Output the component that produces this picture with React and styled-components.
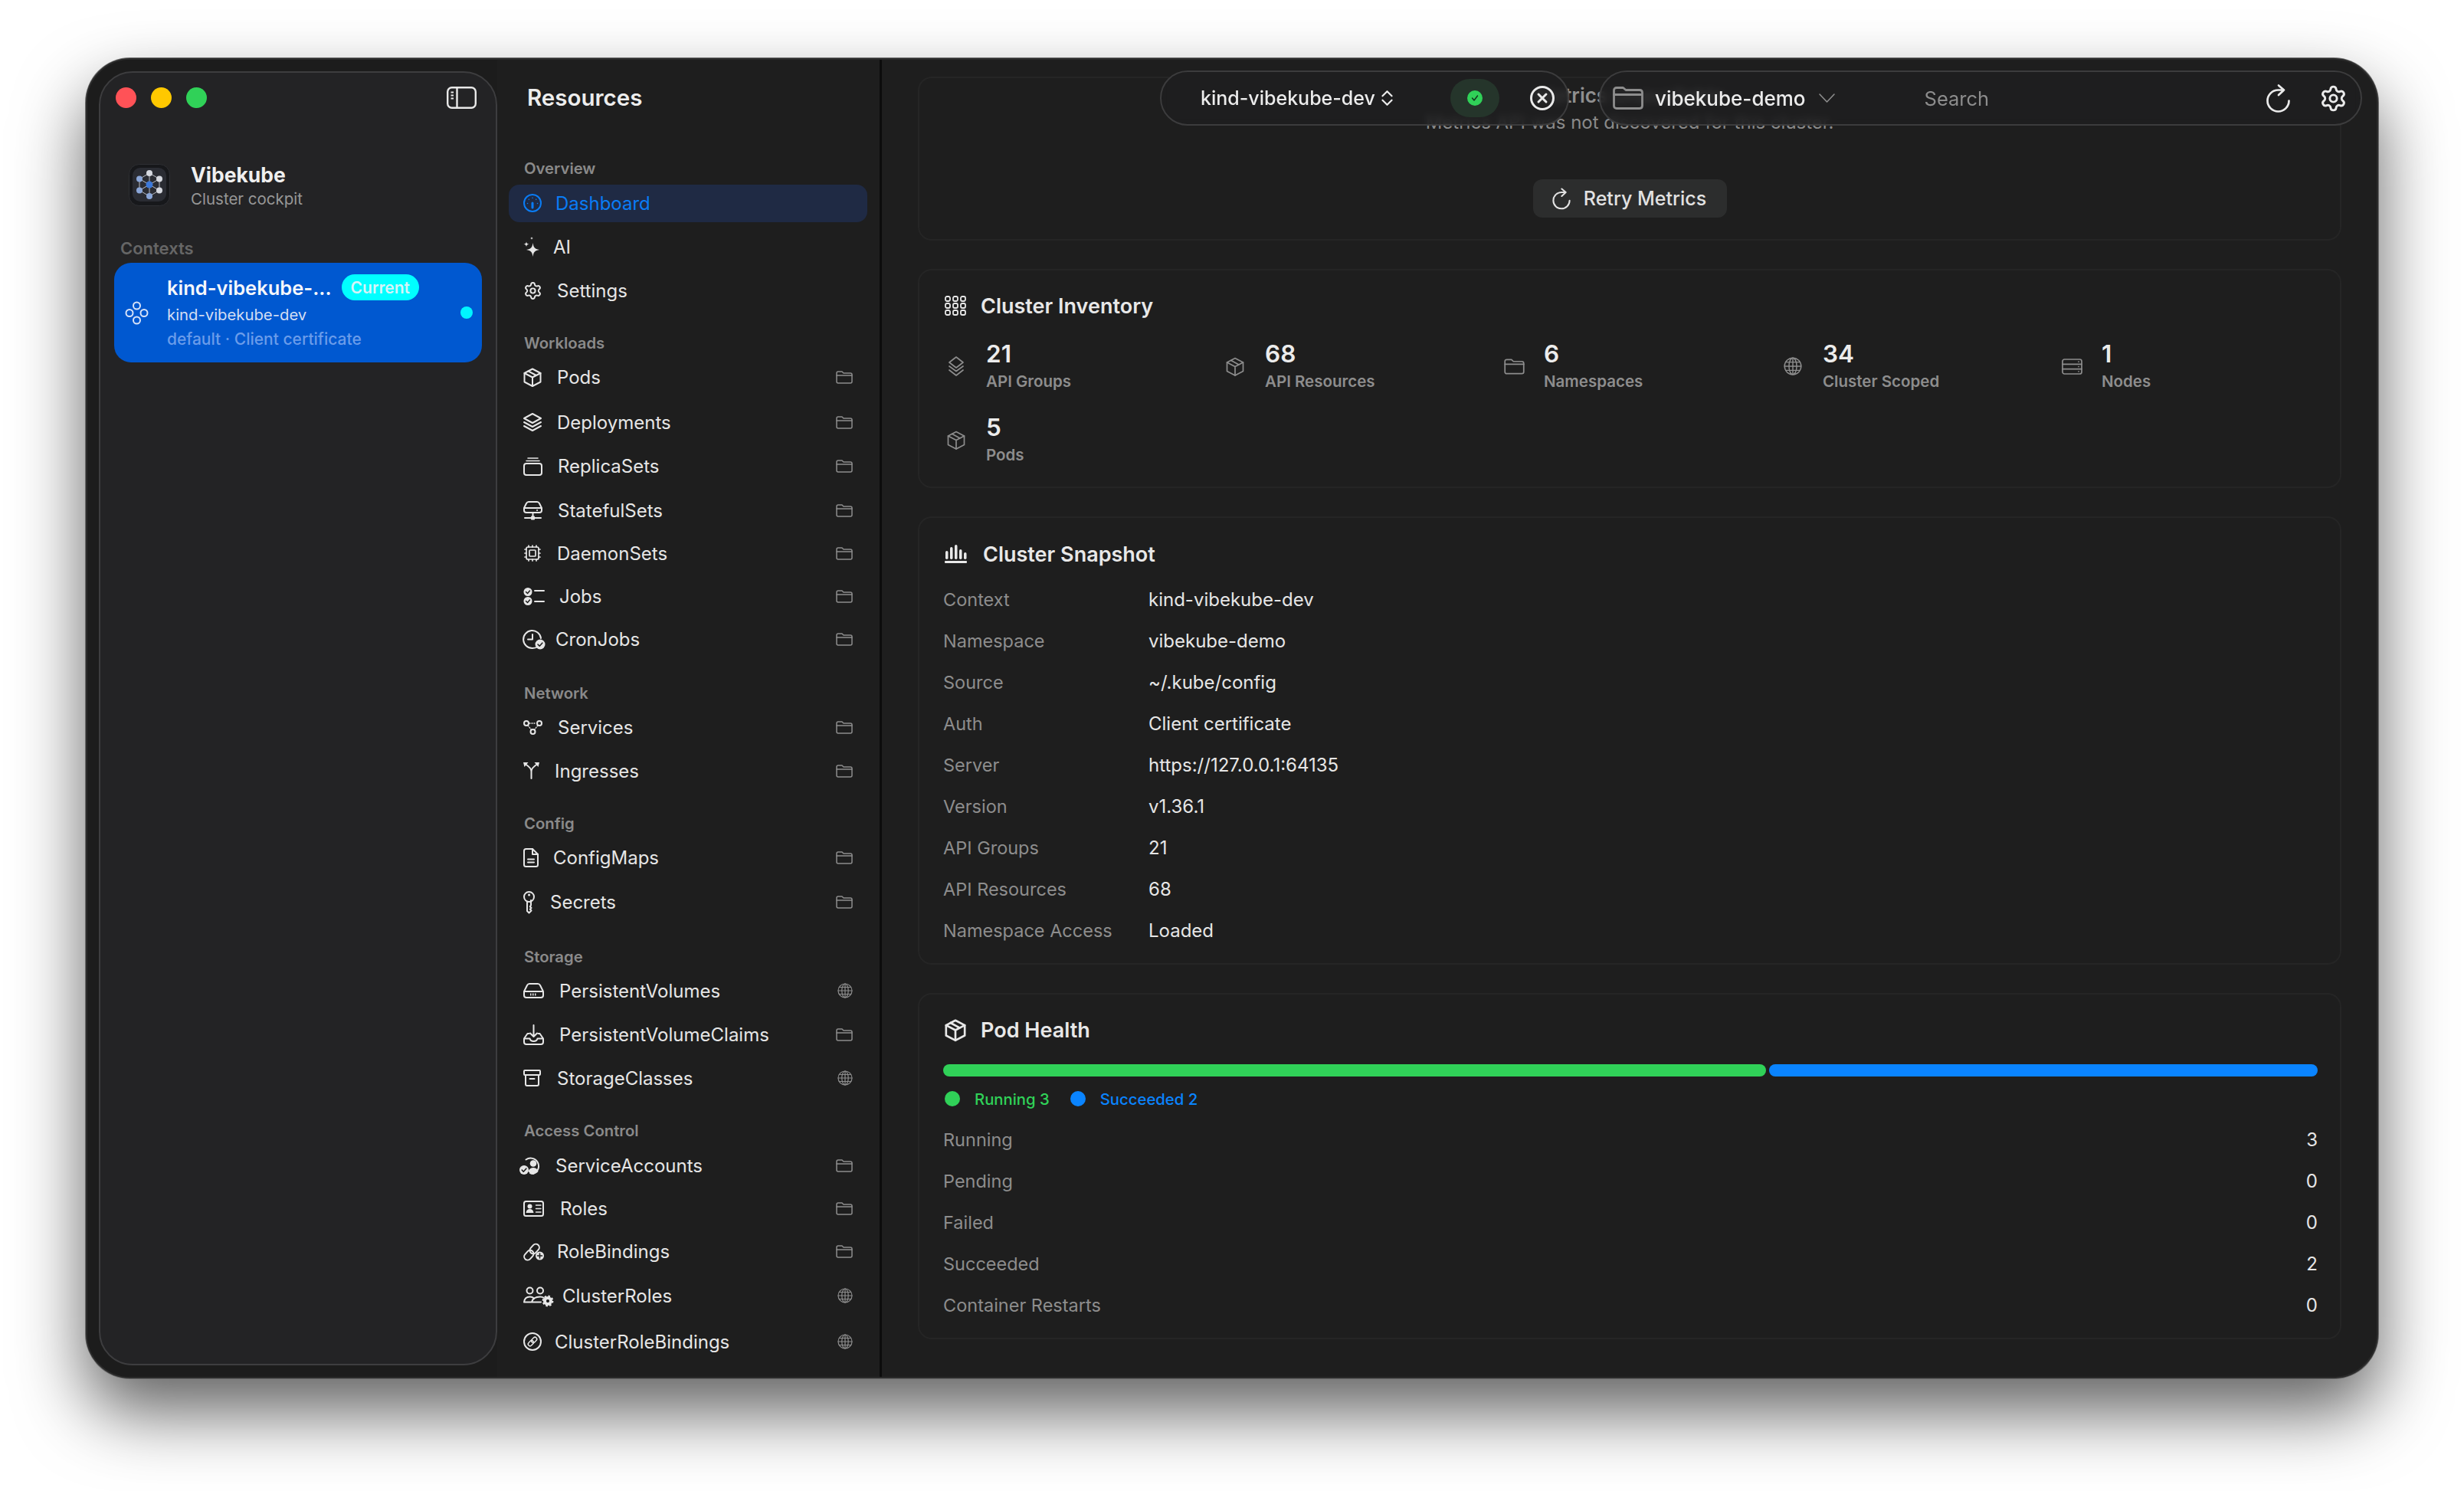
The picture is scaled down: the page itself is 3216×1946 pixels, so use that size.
import styled, { createGlobalStyle } from 'styled-components';
import { Cpu, Settings } from 'lucide-react';

const GlobalStyle = createGlobalStyle`
  html, body {
    margin: 0;
    background: #fff;
    font-family: Inter, "Noto Sans", sans-serif;
    overflow: hidden;
  }
  * { box-sizing: border-box; }
`;

const Page = styled.div`
  width: 3216px;
  height: 1946px;
  padding: 76px 0 0 112px;
`;

const Window = styled.div`
  width: 2992px;
  height: 1723px;
  display: flex;
  background: #1e1e1e;
  border: 2px solid #2a2a2a;
  border-radius: 58px;
  overflow: hidden;
  box-shadow: 0 0 0 1px #6a6a6a, 0 44px 90px rgba(0, 0, 0, 0.62);
`;

/* ---------- left sidebar ---------- */

const SidebarColumn = styled.aside`
  width: 535px;
  flex-shrink: 0;
  padding: 15px 0 15px 15px;
  background: #1c1c1c;
`;

const SidebarPanel = styled.div`
  height: 100%;
  background: #232325;
  border: 2px solid #3d3d3f;
  border-radius: 44px;
  padding-top: 18px;
`;

const TitleBar = styled.div`
  display: flex;
  align-items: center;
  padding: 0 25px 0 20px;
  color: #e8e8e8;
`;

const Light = styled.span`
  width: 27px;
  height: 27px;
  border-radius: 50%;
  margin-right: 19px;
  background: ${(p) => p.$color};
`;

const Spacer = styled.div`
  flex: 1;
`;

const Brand = styled.div`
  display: flex;
  gap: 27px;
  margin-top: 72px;
  padding-left: 37px;
`;

const BrandText = styled.div`
  margin-top: -2px;
`;

const BrandName = styled.div`
  font-size: 26.5px;
  font-weight: 700;
  line-height: 32px;
  color: #efefef;
`;

const BrandSub = styled.div`
  font-size: 20.5px;
  line-height: 32px;
  color: #979797;
`;

const ContextsLabel = styled.div`
  margin-top: 35px;
  padding-left: 26px;
  font-size: 22px;
  font-weight: 600;
  line-height: 26px;
  color: #666;
`;

const ContextCard = styled.div`
  height: 130px;
  margin: 6px 18px 0;
  padding: 0 12px 0 15px;
  display: flex;
  align-items: center;
  gap: 25px;
  background: #0058d0;
  border-radius: 22px;
  color: #d8e3f8;
`;

const ContextText = styled.div`
  flex: 1;
  min-width: 0;
`;

const ContextTitleRow = styled.div`
  display: flex;
  align-items: center;
  height: 36px;
  gap: 13px;
  margin-bottom: 2px;
`;

const ContextTitle = styled.span`
  font-size: 25.5px;
  font-weight: 600;
  color: #f5f7fb;
  white-space: nowrap;
`;

const CurrentBadge = styled.span`
  height: 34px;
  padding: 0 12px;
  display: flex;
  align-items: center;
  border-radius: 17px;
  background: #00ffff;
  font-size: 21px;
  font-weight: 600;
  color: #d6f4f8;
`;

const ContextLine = styled.div`
  font-size: ${(p) => (p.$faded ? 21 : 20.3)}px;
  line-height: 32px;
  font-weight: ${(p) => (p.$faded ? 500 : 400)};
  color: ${(p) => (p.$faded ? '#6a9cea' : '#d4def3')};
  white-space: nowrap;
`;

const ContextDot = styled.span`
  width: 16px;
  height: 16px;
  border-radius: 50%;
  background: #00f5ff;
  flex-shrink: 0;
`;

/* ---------- resources nav ---------- */

const NavColumn = styled.nav`
  width: 502px;
  flex-shrink: 0;
  padding: 31px 16px 0 15px;
  border-right: 3px solid #0c0c0c;
  overflow: hidden;
`;

const NavTitle = styled.h1`
  margin: 0 0 0 24px;
  font-size: 29.5px;
  font-weight: 600;
  line-height: 36px;
  color: #ededed;
`;

const NavSection = styled.div`
  margin-top: ${(p) => p.$top}px;
`;

const NavHeading = styled.div`
  padding-left: 20px;
  font-size: 20.3px;
  font-weight: 600;
  line-height: 26px;
  color: #8a8a8a;
`;

const NavRow = styled.div`
  display: flex;
  align-items: center;
  height: 40px;
  margin-top: ${(p) => p.$gap}px;
  padding: 0 19px;
  font-size: 24px;
  font-weight: 400;
  color: ${(p) => (p.$active ? '#0a7cf5' : '#e6e6e6')};
  ${(p) =>
    p.$active &&
    `
    height: 49px;
    margin-top: ${p.$gap - 4.5}px;
    margin-bottom: -4.5px;
    background: #1f2a44;
    border-radius: 14px;
  `}
`;

const NavIcon = styled.span`
  display: flex;
  margin-left: ${(p) => p.$shift ?? 0}px;
`;

const NavLabel = styled.span`
  margin-left: ${(p) => p.$gap ?? 20}px;
  flex: 1;
`;

const ScopeIcon = styled.span`
  display: flex;
  color: #8d8d8d;
`;

/* ---------- main ---------- */

const Main = styled.main`
  flex: 1;
  min-width: 0;
  position: relative;
  padding: 22px 46px 0 47px;
  display: flex;
  flex-direction: column;
  gap: 37px;
  overflow: hidden;
`;

const Toolbar = styled.div`
  position: absolute;
  top: 14px;
  right: 19px;
  display: flex;
  gap: 39px;
`;

const Pill = styled.div`
  width: ${(p) => p.$width}px;
  height: 72px;
  display: flex;
  align-items: center;
  background: rgba(30, 30, 31, 0.8);
  backdrop-filter: blur(5px);
  border: 2px solid #3c3c3d;
  border-radius: 36px;
  font-size: 25px;
  font-weight: 500;
  color: #ececec;
`;

const PillContext = styled.span`
  margin: 0 7px 0 51px;
`;

const StatusChip = styled.span`
  width: 64px;
  height: 50px;
  margin: 0 40px 0 auto;
  display: flex;
  align-items: center;
  justify-content: center;
  border-radius: 25px;
  background: #25352b;
`;

const PillButton = styled.span`
  display: flex;
  margin-left: ${(p) => p.$left ?? 0}px;
  margin-right: ${(p) => p.$right ?? 0}px;
  color: ${(p) => (p.$muted ? '#8d8d8d' : '#eaeaea')};
`;

const NamespaceName = styled.span`
  margin: 0 17px 0 16px;
  font-size: 26px;
`;

const SearchLabel = styled.span`
  margin: 0 auto 0 117px;
  font-size: 25.5px;
  font-weight: 400;
  color: #8c8c8c;
`;

const Card = styled.section`
  flex-shrink: 0;
  border: 2px solid #252525;
  border-radius: 18px;
  padding: ${(p) => p.$pad};
`;

const MetricsCard = styled(Card)`
  height: 214px;
  display: flex;
  flex-direction: column;
  align-items: center;
`;

const MetricsTitle = styled.div`
  font-size: 26px;
  font-weight: 600;
  line-height: 36px;
  color: #8f8f8f;
`;

const MetricsText = styled.div`
  font-size: 24px;
  line-height: 34px;
  color: #8a8a8a;
`;

const RetryButton = styled.button`
  margin-top: 57px;
  height: 50px;
  width: 253px;
  display: flex;
  align-items: center;
  justify-content: center;
  gap: 18px;
  border: 0;
  border-radius: 12px;
  background: #2c2d2d;
  font-family: inherit;
  font-size: 25px;
  font-weight: 500;
  color: #e2e2e2;
`;

const CardHeader = styled.div`
  display: flex;
  align-items: center;
  gap: ${(p) => p.$gap}px;
  height: 32px;
  padding-left: 2px;
  font-size: 27px;
  font-weight: 600;
  color: #e8e8e8;
`;

const StatGrid = styled.div`
  margin-top: 28px;
  display: grid;
  grid-template-columns: repeat(5, 1fr);
  gap: 26px 28px;
`;

const Stat = styled.div`
  display: flex;
  align-items: center;
  gap: 22px;
`;

const StatIcon = styled.span`
  width: 34px;
  display: flex;
  justify-content: center;
  color: #8d8d8d;
`;

const StatValue = styled.div`
  font-size: 31.5px;
  font-weight: 600;
  line-height: 38px;
  margin-bottom: 2px;
  color: #ececec;
`;

const StatLabel = styled.div`
  font-size: 20.5px;
  font-weight: 600;
  line-height: 30px;
  color: #8d8d8d;
`;

const InfoRows = styled.div`
  margin-top: ${(p) => p.$top}px;
`;

const InfoRow = styled.div`
  height: 54px;
  display: flex;
  align-items: center;
  font-size: 23.5px;
  color: #8d8d8d;
  ${(p) => p.$spread && 'justify-content: space-between;'}
`;

const InfoLabel = styled.span`
  width: ${(p) => (p.$fixed ? '268px' : 'auto')};
`;

const InfoValue = styled.span`
  font-size: 24px;
  color: #e6e6e6;
`;

const HealthBar = styled.div`
  margin-top: 29px;
  display: flex;
  gap: 4px;
`;

const HealthSegment = styled.div`
  flex: ${(p) => p.$grow};
  height: 16px;
  border-radius: 8px;
  background: ${(p) => p.$color};
`;

const Legend = styled.div`
  margin-top: 15px;
  height: 28px;
  display: flex;
  align-items: center;
  font-size: 20.3px;
  font-weight: 500;
`;

const LegendDot = styled.span`
  width: 20px;
  height: 20px;
  margin-left: 2px;
  margin-right: 19px;
  border-radius: 50%;
  background: ${(p) => p.$color};
`;

const LegendText = styled.span`
  margin-right: 25px;
  color: ${(p) => p.$color};
`;

/* ---------- drawings ---------- */

const Svg = styled.svg`
  display: block;
  flex-shrink: 0;
  overflow: visible;
  fill: none;
  stroke: currentColor;
  stroke-width: ${(p) => p.$sw ?? 2};
  stroke-linecap: round;
  stroke-linejoin: round;
`;

const draw = (w, h, body, sw) => {
  const Drawn = ({ width = w, height = h, stroke }) => (
    <Svg width={width} height={height} viewBox={`0 0 ${w} ${h}`} $sw={stroke ?? sw}>
      {body}
    </Svg>
  );
  return Drawn;
};

const fillCur = { fill: 'currentColor', stroke: 'none' };
const BG = '#1e1e1e';

const GaugeIcon = draw(24, 24, (
  <>
    <circle cx="12" cy="12" r="11" />
    <path d="M12 12v6" strokeWidth="3" />
    <path d="M5.500 12.500h.1M7.300 7.300h.1M12 5.200h.1M16.700 7.300h.1M18.500 12.500h.1" strokeWidth="1.500" />
  </>
));

const SparkleIcon = draw(21, 27, (
  <>
    <path {...fillCur} d="M12.500 8c.9 6 2.300 7.900 8.500 9-6.200 1.100-7.600 3-8.500 9-.9-6-2.300-7.900-8.500-9 6.200-1.100 7.600-3 8.500-9z" />
    <path {...fillCur} d="M4 6.500c.4 2.100 1 2.800 3.500 3.200C5 10.100 4.400 10.800 4 13c-.4-2.200-1-2.900-3.500-3.300C3 9.300 3.600 8.600 4 6.500z" />
    <path {...fillCur} d="M11 0c.2 1.200.6 1.600 2 1.900-1.400.3-1.800.7-2 1.900-.2-1.200-.6-1.600-2-1.900 1.400-.3 1.800-.7 2-1.900z" />
  </>
));

const BoxIcon = draw(24, 25, (
  <>
    <path d="M12 1.500 22.500 7v11.500L12 24 1.500 18.500V7z" />
    <path d="M1.500 7 12 12.500 22.500 7M12 12.500V24M6.500 4.300 17 10" />
  </>
));

const LayersIcon = draw(24, 26, (
  <>
    <path d="M12 2 23 8l-11 6L1 8z" />
    <path d="m1 13 11 6 11-6M1 18l11 6 11-6" />
  </>
));

const ReplicaIcon = draw(25, 25, (
  <>
    <rect x="1" y="9" width="23" height="15" rx="3" />
    <path d="M4 5.500h17M6 2h13" strokeWidth="1.600" />
  </>
));

const StatefulIcon = draw(25, 26, (
  <>
    <path d="M4 4c.7-1.400 1.600-2 3-2h11c1.400 0 2.300.6 3 2l3 6v3c0 2-1 3-3 3H4c-2 0-3-1-3-3v-3zM1 10h23" />
    <path d="M18 13h.1M12.500 16v5M2 23h21" />
    <rect {...fillCur} x="10" y="20.500" width="5" height="5" rx="1" />
  </>
));

const ChecklistIcon = draw(27, 23, (
  <>
    <circle {...fillCur} cx="6" cy="5.500" r="5.500" />
    <circle {...fillCur} cx="6" cy="17.500" r="5.500" />
    <path d="m3.500 5.500 2 2 3-3.500M3.500 17.500l2 2 3-3.500" stroke={BG} strokeWidth="1.500" />
    <path d="M15 4h12M15 18h12" />
  </>
));

const CronIcon = draw(28, 25, (
  <>
    <path d="M19 22c-2 1.300-4.400 2-7 2A11.500 11.500 0 1 1 23 11" />
    <path d="M12 6v6.500H6" />
    <circle {...fillCur} cx="22" cy="19" r="6.500" />
    <path d="m19 19 2.200 2.200 3.600-4" stroke={BG} strokeWidth="1.600" />
  </>
));

const ServicesIcon = draw(25, 19, (
  <>
    <circle cx="4" cy="4" r="3" />
    <circle cx="21" cy="4" r="3" />
    <circle cx="12.500" cy="15" r="3" />
    <path d="M8 4h9M6.200 7l4.300 5.500M18.800 7l-4.300 5.500" strokeWidth="1.400" strokeDasharray="1 2" />
  </>
));

const IngressIcon = draw(21, 22, (
  <>
    <path d="M10.500 21V12C10.500 8 7 5 3 2.500M10.500 12c0-4 3.500-7 7.500-9.500" />
    <path {...fillCur} d="M0 0h6.500L1.500 6zM21 0h-6.500l5 6z" />
  </>
));

const DocIcon = draw(20, 25, (
  <>
    <path d="M3.500 1H12l7 7v13.500c0 1.700-1 2.500-2.500 2.500h-13C2 24 1 23.200 1 21.500v-18C1 1.800 2 1 3.500 1z" />
    <path d="M12 1v7h7M6 14.500h8M6 18.500h8" />
  </>
));

const KeyIcon = draw(15, 29, (
  <>
    <circle cx="7.500" cy="7.500" r="6.500" />
    <path d="M5 13.500V26l2.500 2.500 3-3-1.700-1.800 1.700-1.700-1.700-1.800 1.200-1.700v-6.500" />
    <path d="M7.500 5h.1" strokeWidth="3" />
  </>
));

const DriveIcon = draw(27, 20, (
  <>
    <path d="M5 3c.7-1.400 1.600-2 3-2h11c1.400 0 2.300.6 3 2l4 8v5c0 2-1 3-3 3H4c-2 0-3-1-3-3v-5zM1 11h25" />
    <path d="M9 15h9" strokeWidth="3" strokeDasharray="1.500 1.500" strokeLinecap="butt" />
  </>
));

const TrayIcon = draw(27, 27, (
  <>
    <path d="M7.500 12H5.500L1 18.500V23c0 2 1 3 3 3h19c2 0 3-1 3-3v-4.500L21.500 12h-2M1 18.500h7.500c.6 2.400 2.300 3.500 5 3.500s4.400-1.100 5-3.500H26" />
    <path d="M13.500 1v14.500M9 11.500l4.500 4.500 4.500-4.500" />
  </>
));

const ArchiveIcon = draw(23, 22, (
  <>
    <rect x="1" y="1" width="21" height="6" rx="1" />
    <path d="M3 7v12c0 1.300.7 2 2 2h13c1.300 0 2-.7 2-2V7M8.500 12h6" />
  </>
));

const AccountIcon = draw(28, 23, (
  <>
    <path d="M8.500 3.500A10.500 10.500 0 1 1 18 22c-1.500 0-3-.3-4-1" />
    <circle {...fillCur} cx="18" cy="8.500" r="4.300" />
    <path {...fillCur} d="M11.500 19c1-3.300 3.500-5 6.500-5s5.500 1.700 6.500 5c-1.700 1.900-4 3-6.500 3s-4.800-1.100-6.500-3z" />
    <circle {...fillCur} cx="6" cy="17" r="6" />
    <path d="m3.200 17 2 2.200 3.600-4" stroke={BG} strokeWidth="1.600" />
  </>
));

const RoleCardIcon = draw(27, 21, (
  <>
    <rect x="1" y="1" width="25" height="19" rx="2.500" />
    <circle {...fillCur} cx="8.500" cy="7.500" r="3" />
    <path {...fillCur} d="M3.500 16c.4-3.500 2.200-5 5-5s4.600 1.500 5 5z" />
    <path d="M16.500 6h6.500M16.500 10.500h6.500M16.500 15h6.500" strokeWidth="1.500" />
  </>
));

const LinkPlusIcon = draw(27, 24, (
  <>
    <g transform="rotate(-48 12 12)">
      <rect x="-2" y="7.500" width="14" height="9" rx="4.500" />
      <rect x="9" y="7.500" width="14" height="9" rx="4.500" />
    </g>
    <circle {...fillCur} cx="21.500" cy="18" r="5.500" />
    <path d="M21.500 15v6M18.500 18h6" stroke={BG} strokeWidth="1.600" />
  </>
));

const PeopleGearIcon = draw(38, 25, (
  <>
    <circle cx="8.500" cy="5.500" r="4" />
    <circle cx="22" cy="5.500" r="4" />
    <path d="M1 20.500c.5-4.500 3-7 7.500-7 2.500 0 4.500.8 5.500 2.500M1 20.500h9" />
    <path d="M11 20.500c1-4.500 5-7 11-7 2 0 3.500.4 5 1.500M11 20.500h12" />
    <circle cx="32" cy="19" r="4" strokeWidth="4" stroke="currentColor" />
    <circle cx="32" cy="19" r="6.300" strokeWidth="2.200" strokeDasharray="2.500 2.400" strokeLinecap="butt" />
    <circle fill={BG} stroke="none" cx="32" cy="19" r="1.700" />
  </>
));

const LinkCircleIcon = draw(24, 24, (
  <>
    <circle cx="12" cy="12" r="11" />
    <g transform="rotate(-45 12 12)" strokeWidth="1.500">
      <rect x="5" y="9.500" width="8" height="5" rx="2.500" />
      <rect x="11" y="9.500" width="8" height="5" rx="2.500" />
    </g>
  </>
));

const FolderIcon = draw(22, 17, (
  <>
    <path d="M1 3c0-1.300.7-2 2-2h5l2 2h9c1.300 0 2 .7 2 2v9c0 1.300-.7 2-2 2H3c-1.300 0-2-.7-2-2z" />
    <path d="M1 6h20" />
  </>
), 1.500);

const GlobeIcon = draw(20, 20, (
  <>
    <circle cx="10" cy="10" r="9" />
    <ellipse cx="10" cy="10" rx="4.200" ry="9" />
    <path d="M10 1v18M1 10h18M2.300 5.500h15.400M2.300 14.500h15.400" />
  </>
), 1.200);

const StackDownIcon = draw(24, 26, (
  <>
    <path d="M12 1 21 8l-9 7-9-7z" />
    <path d="m3 13 9 6.500 9-6.500M3 18l9 7 9-7" />
  </>
), 1.700);

const ServerIcon = draw(27, 21, (
  <>
    <rect x="1" y="1" width="25" height="19" rx="2.500" />
    <path d="M1 7.300h25M1 13.700h25M22 4.200h.1M22 10.500h.1M22 16.800h.1" />
  </>
), 1.700);

const GridIcon = draw(28, 26, (
  <>
    {[1, 11, 21].map((x) =>
      [1, 10, 19].map((y) => <rect key={`${x}-${y}`} x={x} y={y} width="6" height="6" rx="2" />)
    )}
  </>
), 1.800);

const ChartIcon = draw(29, 24, (
  <>
    <rect {...fillCur} x="1" y="8" width="3.500" height="11" rx="1.700" />
    <rect {...fillCur} x="7" y="3" width="3.500" height="16" rx="1.700" />
    <rect {...fillCur} x="13" y="0" width="3.500" height="19" rx="1.700" />
    <rect {...fillCur} x="19" y="6" width="3.500" height="13" rx="1.700" />
    <rect {...fillCur} x="25" y="10" width="3.500" height="9" rx="1.700" />
    <rect {...fillCur} x="0" y="21" width="29" height="3" rx="1" />
  </>
));

const ClusterNodeIcon = draw(29, 29, (
  <>
    <circle cx="14.500" cy="5" r="4.500" />
    <circle cx="5" cy="14.500" r="4.500" />
    <circle cx="24" cy="14.500" r="4.500" />
    <circle cx="14.500" cy="24" r="4.500" />
  </>
));

const SidebarToggleIcon = draw(39, 29, (
  <>
    <rect x="1.200" y="1.200" width="36.600" height="26.600" rx="5.500" />
    <path d="M13.500 1.200v26.600" />
    <path d="M5.500 7.500h3.500M5.500 11.500h3.500M5.500 15.500h3.500" strokeWidth="2" strokeLinecap="butt" />
  </>
), 2.400);

const UpDownIcon = draw(15, 20, <path d="M2 7.500 7.500 2 13 7.500M2 12.500 7.500 18l5.500-5.500" />);
const ThinChevronIcon = draw(21, 12, <path d="M1 1l9.500 10L20 1" />, 1.600);

const CloseCircleIcon = draw(32, 32, (
  <>
    <circle cx="16" cy="16" r="14.500" />
    <path d="m11 11 10 10M21 11 11 21" />
  </>
), 3);

const StatusDot = draw(22, 20, (
  <>
    <circle cx="11" cy="10" r="10" fill="#30d158" stroke="none" />
    <path d="m7.500 10 2.500 3 4.500-6" stroke="#12301d" strokeWidth="1.400" />
  </>
));

const LargeFolderIcon = draw(39, 30, (
  <>
    <path d="M1.500 5c0-2.300 1.200-3.500 3.500-3.500h8.500l3.500 3h18c2.300 0 3.500 1.200 3.500 3.500v17c0 2.300-1.200 3.500-3.500 3.500H5c-2.300 0-3.500-1.200-3.500-3.500z" />
    <path d="M1.500 10.500h36" />
  </>
), 2.800);

const RefreshIcon = draw(29, 36, <path d="M15 1.500 22 7.500l-7 6.500M22 7.500h-7.500a14 14 0 1 0 14 14" />, 2.700);

const nodes = [
  [27, 12],
  [14, 19.5],
  [40, 19.5],
  [14, 34.5],
  [40, 34.5],
  [27, 42],
];

const AppLogo = () => (
  <svg width="54" height="55" viewBox="0 0 54 55">
    <rect x="0.500" y="0.500" width="53" height="54" rx="13" fill="#17181b" stroke="#2e2f33" />
    <rect x="5" y="5" width="44" height="44" rx="10" fill="#2a2c33" />
    <g stroke="#c9ccd4" strokeWidth="0.900">
      <path d="M27 12 40 19.500V34.500L27 42 14 34.500V19.500Z" fill="none" />
      {nodes.map(([x, y]) => (
        <line key={`${x}${y}`} x1="27" y1="27" x2={x} y2={y} />
      ))}
    </g>
    {nodes.map(([x, y], i) => (
      <circle key={`${x}${y}`} cx={x} cy={y} r="4" fill={i % 2 ? '#8aa6d8' : '#d5d8df'} />
    ))}
    <circle cx="27" cy="27" r="4.500" fill="#3c78d8" />
  </svg>
);

/* ---------- data ---------- */

const GearNav = () => <Settings size={25} strokeWidth={1.9} />;
const CpuNav = () => <Cpu size={24} strokeWidth={1.7} />;

const sections = [
  {
    title: 'Overview',
    top: 62,
    rows: [
      { name: 'Dashboard', Icon: GaugeIcon, gap: 12, active: true, labelGap: 18 },
      { name: 'AI', Icon: SparkleIcon, gap: 17, labelGap: 18 },
      { name: 'Settings', Icon: GearNav, gap: 17, labelGap: 19 },
    ],
  },
  {
    title: 'Workloads',
    top: 36,
    rows: [
      { name: 'Pods', Icon: BoxIcon, gap: 11, scope: 'ns' },
      { name: 'Deployments', Icon: LayersIcon, gap: 19, scope: 'ns' },
      { name: 'ReplicaSets', Icon: ReplicaIcon, gap: 17, scope: 'ns' },
      { name: 'StatefulSets', Icon: StatefulIcon, gap: 18, scope: 'ns' },
      { name: 'DaemonSets', Icon: CpuNav, gap: 16, scope: 'ns' },
      { name: 'Jobs', Icon: ChecklistIcon, gap: 16, scope: 'ns' },
      { name: 'CronJobs', Icon: CronIcon, gap: 16, scope: 'ns', labelGap: 14 },
    ],
  },
  {
    title: 'Network',
    top: 38,
    rows: [
      { name: 'Services', Icon: ServicesIcon, gap: 11, scope: 'ns' },
      { name: 'Ingresses', Icon: IngressIcon, gap: 17, scope: 'ns' },
    ],
  },
  {
    title: 'Config',
    top: 36,
    rows: [
      { name: 'ConfigMaps', Icon: DocIcon, gap: 11, scope: 'ns', labelGap: 19 },
      { name: 'Secrets', Icon: KeyIcon, gap: 18, scope: 'ns' },
    ],
  },
  {
    title: 'Storage',
    top: 39,
    rows: [
      { name: 'PersistentVolumes', Icon: DriveIcon, gap: 11, scope: 'cluster' },
      { name: 'PersistentVolumeClaims', Icon: TrayIcon, gap: 17, scope: 'ns' },
      { name: 'StorageClasses', Icon: ArchiveIcon, gap: 17, scope: 'cluster', labelGap: 21 },
    ],
  },
  {
    title: 'Access Control',
    top: 36,
    rows: [
      { name: 'ServiceAccounts', Icon: AccountIcon, gap: 12, scope: 'ns', labelGap: 19, shift: -5 },
      { name: 'Roles', Icon: RoleCardIcon, gap: 16, scope: 'ns', labelGap: 21 },
      { name: 'RoleBindings', Icon: LinkPlusIcon, gap: 16, scope: 'ns', labelGap: 17 },
      { name: 'ClusterRoles', Icon: PeopleGearIcon, gap: 18, scope: 'cluster', labelGap: 13 },
      { name: 'ClusterRoleBindings', Icon: LinkCircleIcon, gap: 20, scope: 'cluster', labelGap: 17 },
    ],
  },
];

const inventory = [
  { value: '21', label: 'API Groups', icon: <StackDownIcon /> },
  { value: '68', label: 'API Resources', icon: <BoxIcon stroke={1.7} /> },
  { value: '6', label: 'Namespaces', icon: <FolderIcon width={27} height={21} stroke={1.4} /> },
  { value: '34', label: 'Cluster Scoped', icon: <GlobeIcon width={24} height={24} /> },
  { value: '1', label: 'Nodes', icon: <ServerIcon /> },
  { value: '5', label: 'Pods', icon: <BoxIcon stroke={1.7} /> },
];

const snapshot = [
  ['Context', 'kind-vibekube-dev'],
  ['Namespace', 'vibekube-demo'],
  ['Source', '~/.kube/config'],
  ['Auth', 'Client certificate'],
  ['Server', 'https://127.0.0.1:64135'],
  ['Version', 'v1.36.1'],
  ['API Groups', '21'],
  ['API Resources', '68'],
  ['Namespace Access', 'Loaded'],
];

const podHealth = [
  ['Running', 3],
  ['Pending', 0],
  ['Failed', 0],
  ['Succeeded', 2],
  ['Container Restarts', 0],
];

const App = () => (
  <Page>
    <GlobalStyle />
    <Window>
      <SidebarColumn>
        <SidebarPanel>
          <TitleBar>
            <Light $color="#ff5257" />
            <Light $color="#ffc800" />
            <Light $color="#30d158" />
            <Spacer />
            <SidebarToggleIcon />
          </TitleBar>
          <Brand>
            <AppLogo />
            <BrandText>
              <BrandName>Vibekube</BrandName>
              <BrandSub>Cluster cockpit</BrandSub>
            </BrandText>
          </Brand>
          <ContextsLabel>Contexts</ContextsLabel>
          <ContextCard>
            <ClusterNodeIcon />
            <ContextText>
              <ContextTitleRow>
                <ContextTitle>kind-vibekube-...</ContextTitle>
                <CurrentBadge>Current</CurrentBadge>
              </ContextTitleRow>
              <ContextLine>kind-vibekube-dev</ContextLine>
              <ContextLine $faded>default · Client certificate</ContextLine>
            </ContextText>
            <ContextDot />
          </ContextCard>
        </SidebarPanel>
      </SidebarColumn>

      <NavColumn>
        <NavTitle>Resources</NavTitle>
        {sections.map((section) => (
          <NavSection key={section.title} $top={section.top}>
            <NavHeading>{section.title}</NavHeading>
            {section.rows.map(({ name, Icon, gap, scope, active, labelGap, shift }) => (
              <NavRow key={name} $gap={gap} $active={active}>
                <NavIcon $shift={shift}>
                  <Icon />
                </NavIcon>
                <NavLabel $gap={labelGap}>{name}</NavLabel>
                {scope && <ScopeIcon>{scope === 'ns' ? <FolderIcon /> : <GlobeIcon />}</ScopeIcon>}
              </NavRow>
            ))}
          </NavSection>
        ))}
      </NavColumn>

      <Main>
        <Toolbar>
          <Pill $width={534}>
            <PillContext>kind-vibekube-dev</PillContext>
            <UpDownIcon width={17} height={22} />
            <StatusChip>
              <StatusDot />
            </StatusChip>
            <PillButton $right={17}>
              <CloseCircleIcon />
            </PillButton>
          </Pill>
          <Pill $width={996}>
            <PillButton $left={16} $muted>
              <LargeFolderIcon />
            </PillButton>
            <NamespaceName>vibekube-demo</NamespaceName>
            <PillButton $muted>
              <ThinChevronIcon />
            </PillButton>
            <SearchLabel>Search</SearchLabel>
            <PillButton $right={39}>
              <RefreshIcon />
            </PillButton>
            <PillButton $right={17}>
              <Settings size={37} strokeWidth={1.9} />
            </PillButton>
          </Pill>
        </Toolbar>

        <MetricsCard $pad="5px 31px 0">
          <MetricsTitle>Metrics Unavailable</MetricsTitle>
          <MetricsText>Metrics API was not discovered for this cluster.</MetricsText>
          <RetryButton>
            <RefreshIcon width={22} height={28} />
            Retry Metrics
          </RetryButton>
        </MetricsCard>

        <Card $pad="30px 31px 26px">
          <CardHeader $gap={19}>
            <GridIcon />
            Cluster Inventory
          </CardHeader>
          <StatGrid>
            {inventory.map((stat) => (
              <Stat key={stat.label}>
                <StatIcon>{stat.icon}</StatIcon>
                <div>
                  <StatValue>{stat.value}</StatValue>
                  <StatLabel>{stat.label}</StatLabel>
                </div>
              </Stat>
            ))}
          </StatGrid>
        </Card>

        <Card $pad="31px 31px 16px">
          <CardHeader $gap={21}>
            <ChartIcon />
            Cluster Snapshot
          </CardHeader>
          <InfoRows $top={16}>
            {snapshot.map(([label, value]) => (
              <InfoRow key={label}>
                <InfoLabel $fixed>{label}</InfoLabel>
                <InfoValue>{value}</InfoValue>
              </InfoRow>
            ))}
          </InfoRows>
        </Card>

        <Card $pad="30px 29px 16px 31px">
          <CardHeader $gap={19}>
            <BoxIcon width={28} height={29} stroke={2.3} />
            Pod Health
          </CardHeader>
          <HealthBar>
            <HealthSegment $grow={3} $color="#30d158" />
            <HealthSegment $grow={2} $color="#0a84ff" />
          </HealthBar>
          <Legend>
            <LegendDot $color="#30d158" />
            <LegendText $color="#30d158">Running 3</LegendText>
            <LegendDot $color="#0a84ff" />
            <LegendText $color="#0a84ff">Succeeded 2</LegendText>
          </Legend>
          <InfoRows $top={12}>
            {podHealth.map(([label, value]) => (
              <InfoRow key={label} $spread>
                <InfoLabel>{label}</InfoLabel>
                <InfoValue>{value}</InfoValue>
              </InfoRow>
            ))}
          </InfoRows>
        </Card>
      </Main>
    </Window>
  </Page>
);

export default App;
